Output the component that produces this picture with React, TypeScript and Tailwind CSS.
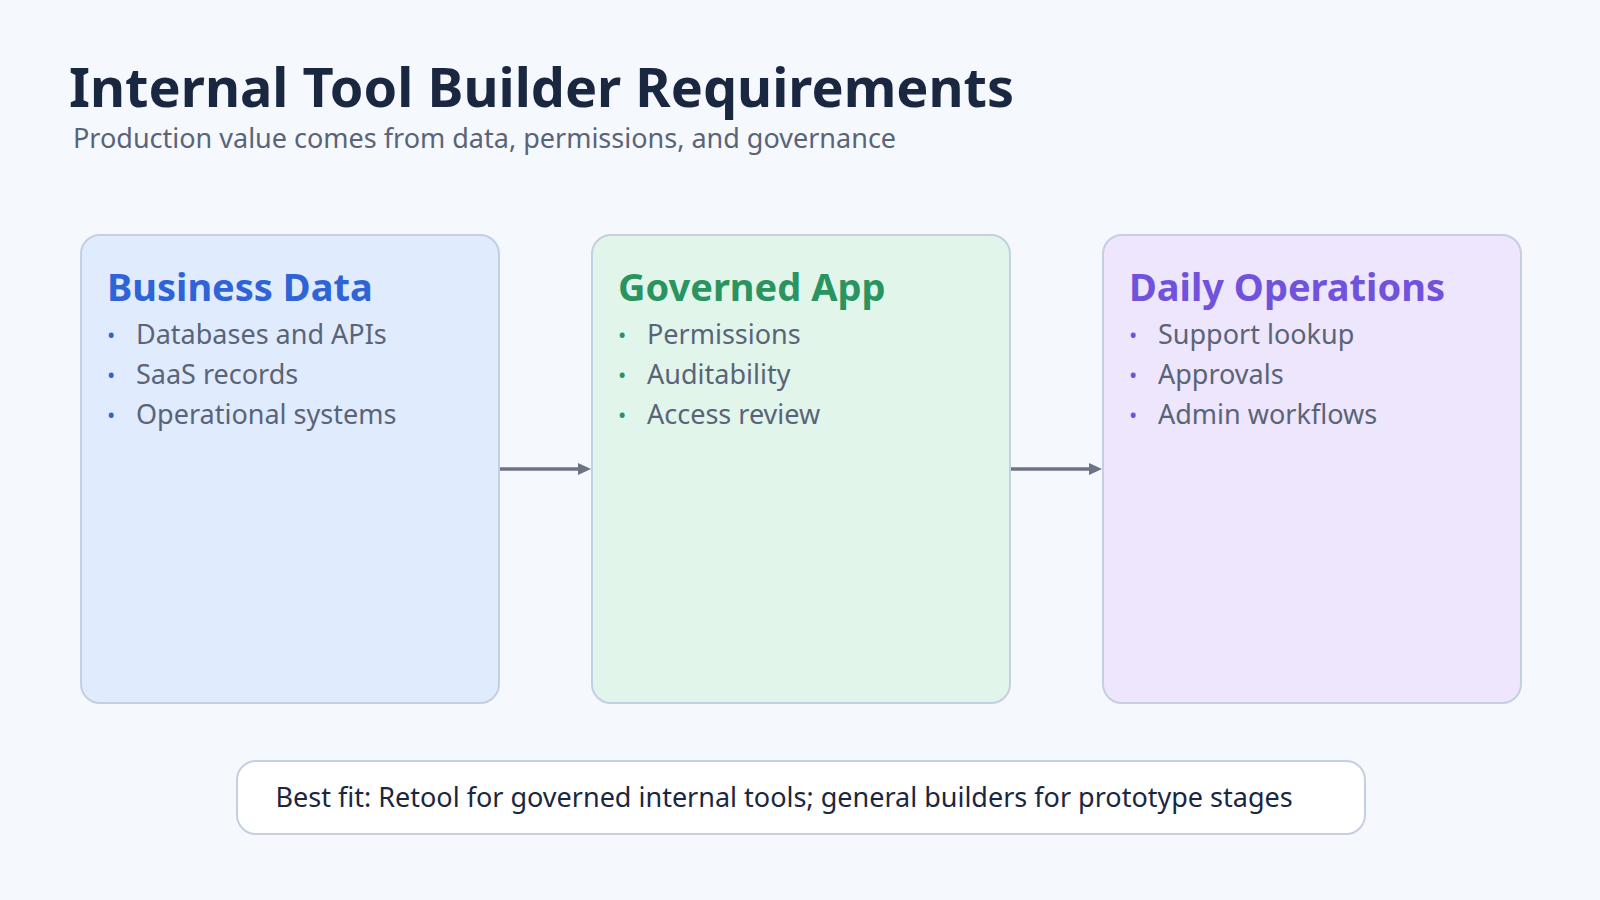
const cards = [
  { title: "Business Data", items: ["Databases and APIs", "SaaS records", "Operational systems"], bg: "bg-[#e0ebfd]", fg: "text-[#2f64d8]" },
  { title: "Governed App", items: ["Permissions", "Auditability", "Access review"], bg: "bg-[#e1f5eb]", fg: "text-[#2a9460]" },
  { title: "Daily Operations", items: ["Support lookup", "Approvals", "Admin workflows"], bg: "bg-[#ede6fd]", fg: "text-[#7052dc]" },
];

function Arrow() {
  return (
    <svg width="91" height="16" viewBox="0 0 91 16" className="shrink-0">
      <line x1="0" y1="8" x2="80" y2="8" stroke="#6b7385" strokeWidth="3.5" />
      <polygon points="78,2 91,8 78,14" fill="#6b7385" />
    </svg>
  );
}

export default function App() {
  return (
    <div className="w-[1600px] h-[900px] bg-[#f5f8fd] font-['Noto_Sans',sans-serif] overflow-hidden">
      <div className="pl-[69px] pt-[54px]">
        <h1 className="text-[54px] leading-[64px] font-bold text-[#1a2740]">Internal Tool Builder Requirements</h1>
        <p className="text-[27px] leading-[36px] text-[#5a6478] pl-[4px] mt-[2px]">Production value comes from data, permissions, and governance</p>
      </div>
      <div className="flex items-center pl-[80px] mt-[78px]">
        {cards.map((c, i) => (
          <div key={c.title} className="flex items-center">
            {i > 0 && <Arrow />}
            <div className={`w-[420px] h-[470px] rounded-[20px] border-2 border-[#c5cfe2] ${c.bg} pl-[25px] pt-[26px]`}>
              <h2 className={`text-[38px] leading-[48px] font-bold ${c.fg}`}>{c.title}</h2>
              <ul className="mt-[4px]">
                {c.items.map((t) => (
                  <li key={t} className="flex items-center text-[27px] leading-[40px] text-[#5a6478]">
                    <span className={`${c.fg} text-[22px] w-[29px]`}>•</span>
                    {t}
                  </li>
                ))}
              </ul>
            </div>
          </div>
        ))}
      </div>
      <div className="flex justify-center mt-[56px]">
        <div className="w-[1130px] h-[75px] ml-[1px] rounded-[20px] border-2 border-[#c5cfe2] bg-white flex items-center pl-[38px] text-[27px] text-[#1a2740]">
          Best fit: Retool for governed internal tools; general builders for prototype stages
        </div>
      </div>
    </div>
  );
}
